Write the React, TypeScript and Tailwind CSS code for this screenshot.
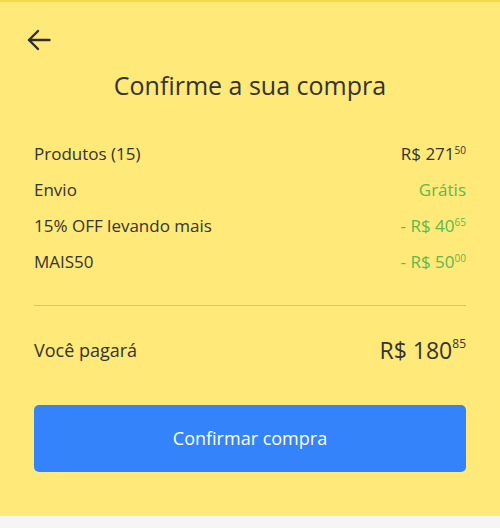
type Row = { label: string; value: string; cents?: string; green?: boolean }

const rows: Row[] = [
  { label: 'Produtos (15)', value: 'R$ 271', cents: '50' },
  { label: 'Envio', value: 'Grátis', green: true },
  { label: '15% OFF levando mais', value: '- R$ 40', cents: '65', green: true },
  { label: 'MAIS50', value: '- R$ 50', cents: '00', green: true },
]

function Price({ value, cents, className }: { value: string; cents?: string; className?: string }) {
  return (
    <span className={`flex items-start ${className ?? ''}`}>
      <span>{value}</span>
      {cents && <span className="text-[10px] leading-none mt-[3px]">{cents}</span>}
    </span>
  )
}

export default function App() {
  return (
    <div className="w-[500px] h-[528px] bg-[#f5f5f5] font-['Open_Sans',sans-serif] text-[#333]">
      <div className="h-[516px] bg-[#ffe978] border-t-2 border-[#f2da45] flex flex-col px-[34px]">
        <button className="mt-[27px] -ml-[7px] w-[24px] h-[22px] flex text-[#2d2d2d]">
          <svg width="24" height="22" viewBox="0 0 24 22" fill="none" stroke="currentColor" strokeWidth="2.4" strokeLinecap="round" strokeLinejoin="round">
            <path d="M22.5 11H2" />
            <path d="M11 2L2 11l9 9" />
          </svg>
        </button>
        <h1 className="mt-[18px] text-center text-[25px] leading-[32px] font-normal">Confirme a sua compra</h1>

        <div className="mt-[41px] flex flex-col gap-[12px] text-[17px] leading-[24px]">
          {rows.map((r) => (
            <div key={r.label} className="flex justify-between">
              <span>{r.label}</span>
              <Price value={r.value} cents={r.cents} className={r.green ? 'text-[#5cb94a]' : ''} />
            </div>
          ))}
        </div>

        <div className="mt-[31px] h-px bg-[#d6c66a]" />

        <div className="mt-[30px] flex justify-between items-center">
          <span className="text-[18px] leading-[28px]">Você pagará</span>
          <span className="flex items-start text-[23px] leading-[28px]">
            <span>R$ 180</span>
            <span className="text-[12px] leading-none mt-[2px]">85</span>
          </span>
        </div>

        <button className="mt-[41px] h-[67px] w-full rounded-[5px] bg-[#3483fa] text-white text-[18px]">
          Confirmar compra
        </button>
      </div>
    </div>
  )
}
